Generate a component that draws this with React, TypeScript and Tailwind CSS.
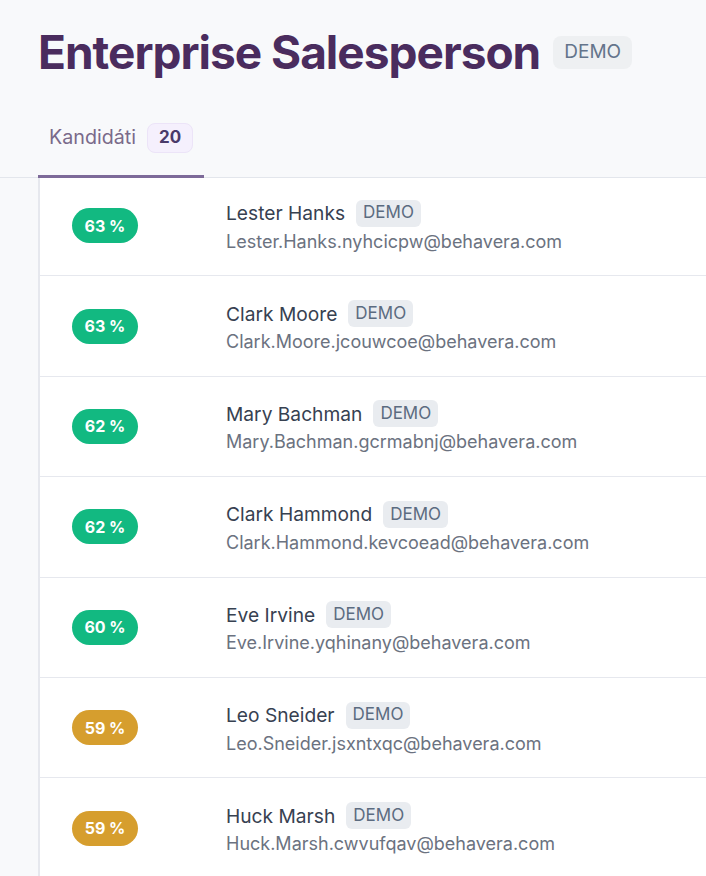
const candidates = [
  { score: 63, name: 'Lester Hanks', email: 'Lester.Hanks.nyhcicpw@behavera.com' },
  { score: 63, name: 'Clark Moore', email: 'Clark.Moore.jcouwcoe@behavera.com' },
  { score: 62, name: 'Mary Bachman', email: 'Mary.Bachman.gcrmabnj@behavera.com' },
  { score: 62, name: 'Clark Hammond', email: 'Clark.Hammond.kevcoead@behavera.com' },
  { score: 60, name: 'Eve Irvine', email: 'Eve.Irvine.yqhinany@behavera.com' },
  { score: 59, name: 'Leo Sneider', email: 'Leo.Sneider.jsxntxqc@behavera.com' },
  { score: 59, name: 'Huck Marsh', email: 'Huck.Marsh.cwvufqav@behavera.com' },
];

const CandidateRow = ({ score, name, email }: { score: number; name: string; email: string }) => {
  const good = score >= 60;
  return (
    <div className="flex items-center h-[100.4px] border-b border-[#e6e8ee]">
      <div className="w-[186px] pl-[32px] shrink-0">
        <span
          className={`inline-flex items-center justify-center w-[66px] h-[35px] rounded-full text-white text-[16px] font-bold ${
            good ? 'bg-[#12b981]' : 'bg-[#d69e2e]'
          }`}
        >
          {score} %
        </span>
      </div>
      <div className="flex flex-col gap-[2px] pt-[3px]">
        <div className="flex items-center gap-[11px]">
          <span className="text-[19.2px] text-[#374151] leading-[26px]">{name}</span>
          <span className="px-[7px] h-[27px] flex items-center rounded-md bg-[#e9ecf0] text-[#5b6b80] text-[17px]">
            DEMO
          </span>
        </div>
        <span className="text-[18px] text-[#6b7280] leading-[26px]">{email}</span>
      </div>
    </div>
  );
};

export default function App() {
  return (
    <div className="min-h-[876px] bg-[#f8f9fb] font-['Inter',sans-serif] overflow-hidden">
      <div className="pl-[38px] pt-[24px] flex items-center gap-[13px]">
        <h1 className="text-[46px] font-bold text-[#4a2c5e] tracking-[-1px] leading-[56px]">
          Enterprise Salesperson
        </h1>
        <span className="px-[11px] h-[33px] flex items-center rounded-lg bg-[#eef0f2] text-[#64748b] text-[19px] mt-[1px]">
          DEMO
        </span>
      </div>
      <div className="mt-[42px] border-b border-[#e3e6ec] pl-[38px] flex">
        <div className="px-[11px] pb-[21px] border-b-[3px] border-[#7d6a99] -mb-px">
          <div className="flex items-center gap-[11px] h-[32px]">
            <span className="text-[19.7px] text-[#7a6a8a]">Kandidáti</span>
            <span className="px-[11px] h-[30px] flex items-center rounded-lg bg-[#f5f0fd] border border-[#ece4f8] text-[#4a3a6a] text-[17px] font-bold">
              20
            </span>
          </div>
        </div>
      </div>
      <div className="ml-[38px] bg-white border-l-2 border-[#e6e8ee] overflow-hidden">
        <div className="-mt-[2px]">
          {candidates.map((c) => (
            <CandidateRow key={c.email} {...c} />
          ))}
        </div>
      </div>
    </div>
  );
}
